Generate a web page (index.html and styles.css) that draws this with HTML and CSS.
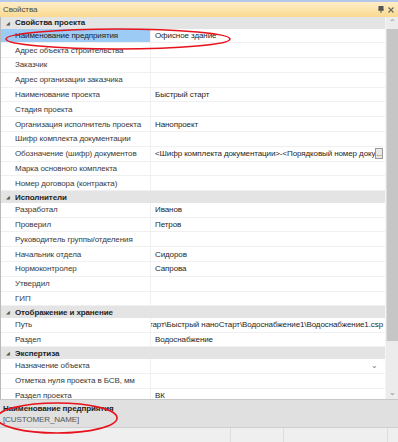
FILE: index.html
```html
<!DOCTYPE html>
<html lang="ru">
<head>
    <meta charset="UTF-8">
    <title>Свойства</title>
    <link rel="stylesheet" href="styles.css">
</head>
<body>
    <div class="panel">
        <div class="titlebar">
            <span class="title">Свойства</span>
            <span class="tools">
                <svg width="6" height="7" viewBox="0 0 6 7"><path d="M1 0h4v4H1z M0 4h6 M3 4v3" fill="#555" stroke="#555" stroke-width="1"/></svg>
                <svg width="6" height="6" viewBox="0 0 6 6"><path d="M0.5 0.5l5 5M5.5 0.5l-5 5" stroke="#666" stroke-width="1.1"/></svg>
            </span>
        </div>

        <div class="body">
            <div class="grid">
                <div class="row cat"><span class="tri">&#9698;</span><span>Свойства проекта</span></div>
                <div class="row selected"><span class="name">Наименование предприятия</span><span class="value">Офисное здание</span></div>
                <div class="row"><span class="name">Адрес объекта строительства</span><span class="value"></span></div>
                <div class="row"><span class="name">Заказчик</span><span class="value"></span></div>
                <div class="row"><span class="name">Адрес организации заказчика</span><span class="value"></span></div>
                <div class="row"><span class="name">Наименование проекта</span><span class="value">Быстрый старт</span></div>
                <div class="row"><span class="name">Стадия проекта</span><span class="value"></span></div>
                <div class="row"><span class="name">Организация исполнитель проекта</span><span class="value">Нанопроект</span></div>
                <div class="row"><span class="name">Шифр комплекта документации</span><span class="value"></span></div>
                <div class="row"><span class="name">Обозначение (шифр) документов</span><span class="value with-btn"><span class="clip">&lt;Шифр комплекта документации&gt;-&lt;Порядковый номер документа&gt;</span><span class="dots">...</span></span></div>
                <div class="row"><span class="name">Марка основного комплекта</span><span class="value"></span></div>
                <div class="row"><span class="name">Номер договора (контракта)</span><span class="value"></span></div>

                <div class="row cat"><span class="tri">&#9698;</span><span>Исполнители</span></div>
                <div class="row"><span class="name">Разработал</span><span class="value">Иванов</span></div>
                <div class="row"><span class="name">Проверил</span><span class="value">Петров</span></div>
                <div class="row"><span class="name">Руководитель группы/отделения</span><span class="value"></span></div>
                <div class="row"><span class="name">Начальник отдела</span><span class="value">Сидоров</span></div>
                <div class="row"><span class="name">Нормоконтролер</span><span class="value">Сапрова</span></div>
                <div class="row"><span class="name">Утвердил</span><span class="value"></span></div>
                <div class="row"><span class="name">ГИП</span><span class="value"></span></div>

                <div class="row cat"><span class="tri">&#9698;</span><span>Отображение и хранение</span></div>
                <div class="row"><span class="name">Путь</span><span class="value path"><span>Быстрый старт\Быстрый наноСтарт\Водоснабжение1\Водоснабжение1.csp</span></span></div>
                <div class="row"><span class="name">Раздел</span><span class="value">Водоснабжение</span></div>

                <div class="row cat"><span class="tri">&#9698;</span><span>Экспертиза</span></div>
                <div class="row"><span class="name">Назначение объекта</span><span class="value with-btn"><span class="clip"></span><span class="arrow">&#8964;</span></span></div>
                <div class="row"><span class="name">Отметка нуля проекта в БСВ, мм</span><span class="value"></span></div>
                <div class="row"><span class="name">Раздел проекта</span><span class="value">ВК</span></div>
            </div>

            <div class="scrollbar">
                <div class="sb-btn">&#8963;</div>
                <div class="sb-thumb"></div>
                <div class="sb-track"></div>
                <div class="sb-btn">&#8964;</div>
            </div>
        </div>

        <div class="desc">
            <div class="desc-title">Наименование предприятия</div>
            <div class="desc-text">[CUSTOMER_NAME]</div>
        </div>

        <div class="status">
            <div class="cell c1"></div>
            <div class="cell c2"></div>
            <div class="cell c3"></div>
            <div class="cell c4"></div>
        </div>

        <!-- красные пометки поверх -->
        <svg class="mark mark-top" width="230" height="24" viewBox="0 0 230 24"><ellipse cx="115" cy="12" rx="112" ry="10" fill="none" stroke="#e8121c" stroke-width="1.6"/></svg>
        <svg class="mark mark-bottom" width="126" height="36" viewBox="0 0 126 36"><ellipse cx="60" cy="18" rx="60" ry="15" fill="none" stroke="#e8121c" stroke-width="1.6"/></svg>
    </div>
</body>
</html>
```

FILE: styles.css
```css
body {
    margin: 0;
    padding: 0;
    background: #f0f0f0;
    font-family: 'Liberation Sans', Arial, sans-serif;
    font-size: 8px;
    letter-spacing: -0.1px;
    color: #333;
}
.panel {
    position: relative;
    width: 398px;
    height: 442px;
    overflow: hidden;
    border-top: 2px solid #b5c8ec;
    box-sizing: border-box;
    display: flex;
    flex-direction: column;
}
.titlebar {
    height: 15px;
    flex: none;
    display: flex;
    align-items: center;
    justify-content: space-between;
    padding: 0 4px 0 3px;
    background: linear-gradient(#fdeec8, #fbd98f);
    color: #4a4a4a;
}
.tools {
    display: flex;
    gap: 4px;
    align-items: center;
}
.body {
    height: 383px;
    flex: none;
    display: flex;
    background: #fff;
    border-left: 1px solid #b9b9b9;
    border-bottom: 1px solid #c8c8c8;
    box-sizing: border-box;
}
.grid {
    flex: 1;
    overflow: hidden;
}
.row {
    height: 14.8px;
    display: grid;
    grid-template-columns: 150px 1fr;
    align-items: center;
    border-bottom: 1px solid #f0f0f0;
    box-sizing: border-box;
    color: #3a3a3a;
    white-space: nowrap;
}
.row .name {
    padding-left: 14px;
    height: 100%;
    display: flex;
    align-items: center;
    border-right: 1px solid #f0f0f0;
    overflow: hidden;
}
.row .value {
    padding-left: 4px;
    padding-right: 2px;
    overflow: hidden;
    color: #262626;
}
.row.selected .name {
    background: #9ccbf6;
    color: #222;
}
.row.cat {
    height: 11.5px;
    display: flex;
    background: #e4e4e4;
    border-bottom: none;
    font-weight: bold;
    color: #1e1e1e;
}
.tri {
    width: 14px;
    text-align: center;
    font-size: 5px;
    color: #555;
    font-weight: normal;
}
.with-btn {
    display: flex;
    align-items: center;
    justify-content: space-between;
}
.clip {
    overflow: hidden;
    flex: 1;
}
.dots {
    flex: none;
    width: 8px;
    height: 11px;
    line-height: 9px;
    text-align: center;
    border: 1px solid #9a9a9a;
    background: #e9e9e9;
    font-size: 7px;
    color: #333;
    box-sizing: border-box;
}
.arrow {
    flex: none;
    width: 8px;
    font-size: 8px;
    line-height: 6px;
    color: #777;
    padding-right: 4px;
}
.path {
    display: flex;
    justify-content: flex-end;
    color: #9a9a9a;
}
.scrollbar {
    width: 12px;
    flex: none;
    display: flex;
    flex-direction: column;
    background: #ececec;
    border-left: 1px solid #f5f5f5;
}
.sb-btn {
    height: 12px;
    text-align: center;
    font-size: 8px;
    line-height: 12px;
    color: #8a8a8a;
}
.sb-thumb {
    height: 312px;
    background: #c6c6c6;
    border-left: 1px solid #dcdcdc;
}
.sb-track {
    flex: 1;
}
.desc {
    height: 28px;
    flex: none;
    background: #e0e0e0;
    border-bottom: 1px solid #cfcfcf;
    padding: 4px 3px 0;
    box-sizing: border-box;
}
.desc-title {
    font-weight: bold;
    color: #1e1e1e;
    line-height: 10px;
}
.desc-text {
    color: #555;
    line-height: 11px;
}
.status {
    flex: 1;
    display: flex;
    background: #efefef;
}
.cell {
    border-right: 1px solid #dedede;
}
.c1 { width: 230px; }
.c2 { width: 52px; }
.c3 { width: 103px; }
.c4 { flex: 1; border-right: none; }
.mark {
    position: absolute;
}
.mark-top {
    left: 3px;
    top: 25px;
}
.mark-bottom {
    left: -3px;
    top: 398px;
}
```
